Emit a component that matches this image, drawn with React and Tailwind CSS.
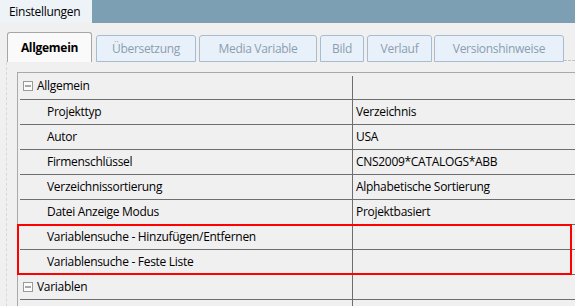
import React from "react";

const tabs = [
    { label: "Übersetzung", w: "w-[100px]", ml: "ml-[4px]" },
    { label: "Media Variable", w: "w-[118px]", ml: "ml-[3px]" },
    { label: "Bild", w: "w-[44px]", ml: "ml-[3px]" },
    { label: "Verlauf", w: "w-[65px]", ml: "ml-[3px]" },
    { label: "Versionshinweise", w: "w-[130px]", ml: "ml-[2px]" },
];

const groups = [
    {
        name: "Allgemein",
        rows: [
            ["Projekttyp", "Verzeichnis"],
            ["Autor", "USA"],
            ["Firmenschlüssel", "CNS2009*CATALOGS*ABB"],
            ["Verzeichnissortierung", "Alphabetische Sortierung"],
            ["Datei Anzeige Modus", "Projektbasiert"],
            ["Variablensuche - Hinzufügen/Entfernen", ""],
            ["Variablensuche - Feste Liste", ""],
        ],
    },
    { name: "Variablen", rows: [["", ""]] },
];

const MinusBox = () => (
    <svg width="10" height="10" viewBox="0 0 10 10" className="shrink-0">
        <rect x="0.5" y="0.5" width="9" height="9" fill="#fbfbfb" stroke="#9a9a9a" />
        <line x1="2" y1="5" x2="8" y2="5" stroke="#555" />
    </svg>
);

const CategoryRow = ({ name, first }) => (
    <div className={`flex ${first ? "h-[27px]" : "h-[25px]"} border-b border-[#6e6e6e]`}>
        <div className="w-[332px] flex items-center pl-[3px] gap-[4px]">
            <MinusBox />
            <span>{name}</span>
        </div>
        <div className={`flex-1 border-l border-[#6e6e6e] ${first ? "mt-[3px]" : ""}`} />
    </div>
);

const PropRow = ({ label, value }) => (
    <div className="flex h-[25px] border-b border-[#6e6e6e]">
        <div className="w-[332px] flex items-center pl-[27px]">{label}</div>
        <div className="flex-1 border-l border-[#6e6e6e] flex items-center pl-[3px]">{value}</div>
    </div>
);

const App = () => {
    return (
        <div
            className="w-[575px] h-[306px] overflow-hidden bg-[#f0f0f0] text-[12px] tracking-[-0.3px] text-black"
            style={{ fontFamily: '"Open Sans", "Noto Sans", sans-serif' }}
        >
            <div className="h-[23px] bg-[#7c9fb4] flex">
                <div className="w-[92px] bg-[#eef3f8] flex items-center pl-[9px]">Einstellungen</div>
            </div>

            <div className="relative">
                <div className="flex items-end h-[39px] pl-[7px]">
                    <div className="w-[85px] h-[30px] bg-[#fafafa] border border-b-0 border-[#a6a6a6] rounded-t-[3px] flex items-center justify-center font-bold">
                        Allgemein
                    </div>
                    {tabs.map((t) => (
                        <div
                            key={t.label}
                            className={`${t.w} ${t.ml} h-[27px] bg-[#e8f1f9] border border-[#a7bccf] rounded-t-[3px] flex items-center justify-center text-[#8c9db1]`}
                        >
                            {t.label}
                        </div>
                    ))}
                    <div className="flex-1 border-b border-dashed border-[#c4c4c4] mb-[1px]" />
                </div>

                <div className="ml-[6px] border-l border-dashed border-[#d8d8d8] pt-[10px] pl-[10px] h-[300px]">
                    <div className="border-l border-t border-[#a9a9a9] pl-[2px] relative">
                        {groups.map((g, gi) => (
                            <div key={g.name}>
                                <CategoryRow name={g.name} first={gi === 0} />
                                {g.rows.map(([l, v], i) => (
                                    <PropRow key={i} label={l} value={v} />
                                ))}
                            </div>
                        ))}
                        <div className="absolute left-[-1px] top-[151px] w-[555px] h-[51px] border-2 border-[#ff0000] pointer-events-none" />
                    </div>
                </div>
            </div>
        </div>
    );
};

export default App;
